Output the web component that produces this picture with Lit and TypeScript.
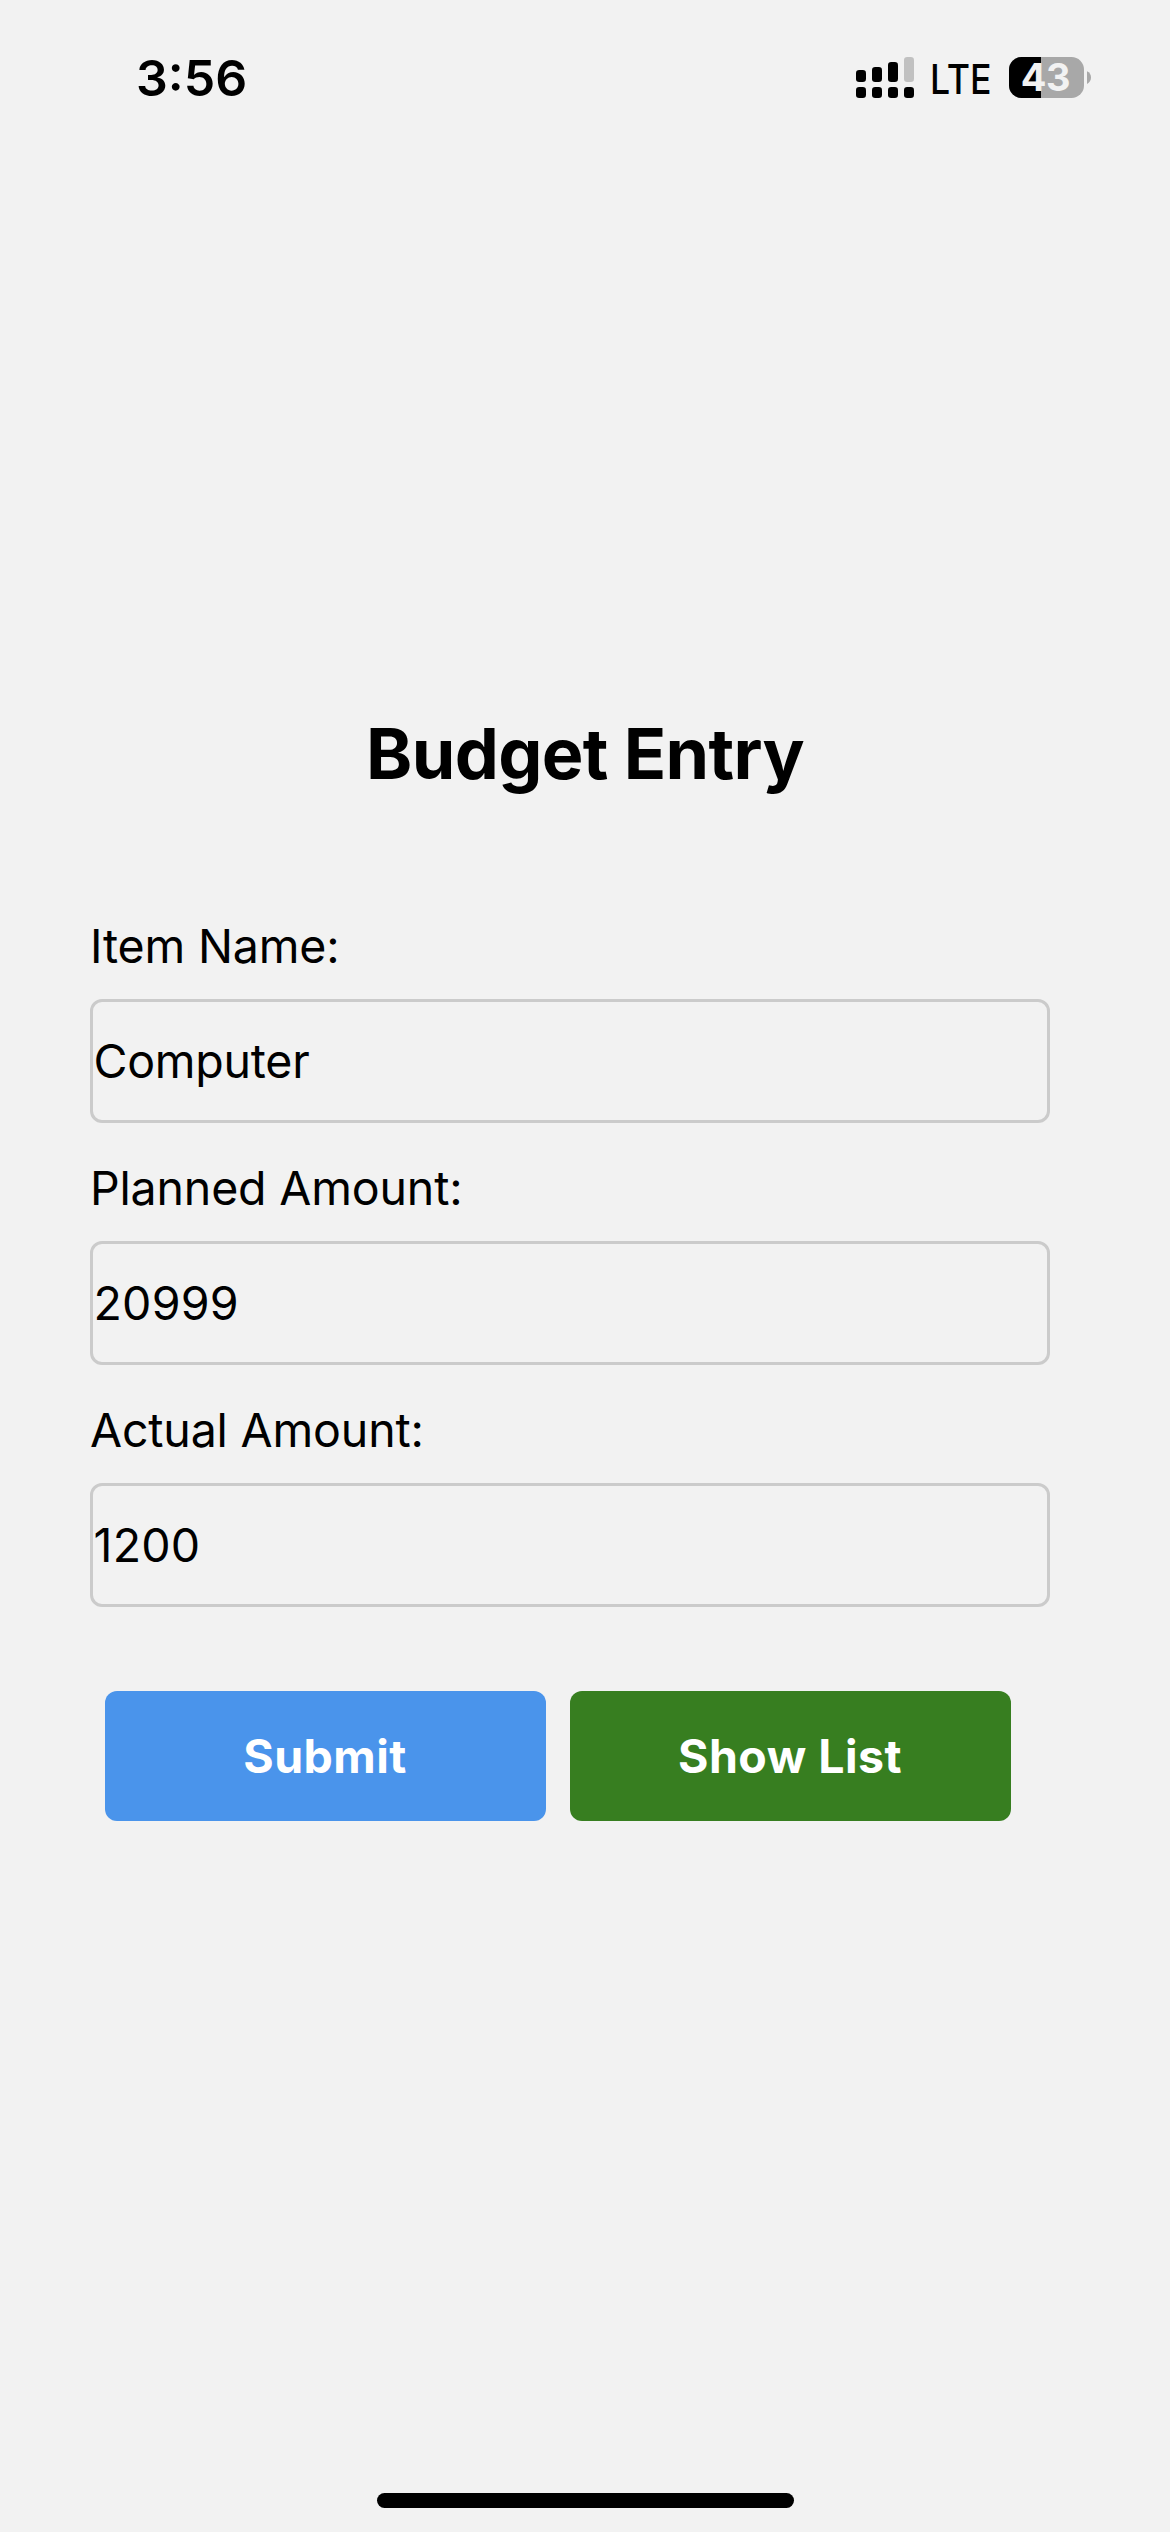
import { LitElement, html, css } from "lit";
import { customElement, property, state } from "lit/decorators.js";

@customElement("status-bar")
class StatusBar extends LitElement {
  static styles = css`
    :host {
      display: flex;
      justify-content: space-between;
      align-items: flex-start;
      box-sizing: border-box;
      height: 141px;
      padding: 48px 78px 0 136px;
      color: #000;
    }
    .time {
      font-size: 50px;
      line-height: 60px;
      font-weight: 600;
    }
    .right {
      display: flex;
      align-items: flex-start;
      padding-top: 6px;
    }
    svg {
      display: block;
      margin-top: 3px;
      overflow: visible;
    }
    .network {
      width: 62px;
      margin-left: 16.4px;
      margin-right: 16.6px;
      font-size: 41px;
      line-height: 50px;
      font-weight: 500;
      transform: scaleX(0.87);
      transform-origin: left center;
      white-space: nowrap;
    }
    .level {
      font-size: 38px;
      font-weight: 700;
      letter-spacing: -0.5px;
    }
  `;

  render() {
    return html`
      <div class="time">3:56</div>
      <div class="right">
        <svg width="58" height="41" viewBox="0 0 58 41">
          <rect x="0" y="13" width="10" height="12" rx="3.2" />
          <rect x="16" y="10" width="10" height="15" rx="3.2" />
          <rect x="32" y="5" width="10" height="20" rx="3.2" />
          <rect x="48" y="0" width="10" height="25" rx="3.2" fill="#c1c1c1" />
          <rect x="0" y="30" width="10" height="11" rx="3.2" />
          <rect x="16" y="30" width="10" height="11" rx="3.2" />
          <rect x="32" y="30" width="10" height="11" rx="3.2" />
          <rect x="48" y="30" width="10" height="11" rx="3.2" />
        </svg>
        <div class="network">LTE</div>
        <svg width="83" height="41" viewBox="0 0 83 41">
          <defs>
            <clipPath id="body"><rect width="75" height="41" rx="12.5" /></clipPath>
          </defs>
          <g clip-path="url(#body)">
            <rect width="75" height="41" fill="#a8a8a8" />
            <rect width="32" height="41" fill="#000" />
          </g>
          <path d="M78 14.2C80.6 15.3 82 17.8 82 20.6C82 23.4 80.6 25.9 78 27Z" fill="#a8a8a8" />
          <text class="level" x="11.8" y="34" fill="#f2f2f2">43</text>
        </svg>
      </div>
    `;
  }
}

@customElement("form-field")
class FormField extends LitElement {
  @property() label = "";
  @property() value = "";
  @property({ type: Boolean, reflect: true }) numeric = false;

  static styles = css`
    :host {
      display: flex;
      flex-direction: column;
      gap: 25px;
      color: #000;
    }
    .label {
      font-size: 46.5px;
      line-height: 56px;
      letter-spacing: -0.17px;
      white-space: nowrap;
    }
    .input {
      box-sizing: border-box;
      width: 100%;
      height: 124px;
      margin: 0;
      padding: 0 0 0 0.5px;
      border: 3px solid #cbcbcb;
      border-radius: 12px;
      outline: none;
      background: transparent;
      color: #000;
      font-family: inherit;
      font-size: 46.5px;
      letter-spacing: -0.25px;
    }
    :host([numeric]) .input {
      letter-spacing: 0.25px;
    }
  `;

  render() {
    return html`
      <label class="label" for="field">${this.label}</label>
      <input class="input" id="field" type="text" .value=${this.value} />
    `;
  }
}

@customElement("app-root")
class AppRoot extends LitElement {
  @state() private fields = [
    { label: "Item Name:", value: "Computer", numeric: false },
    { label: "Planned Amount:", value: "20999", numeric: true },
    { label: "Actual Amount:", value: "1200", numeric: true },
  ];

  static styles = css`
    :host {
      display: flex;
      flex-direction: column;
      box-sizing: border-box;
      width: 1170px;
      height: 2532px;
      overflow: hidden;
      background: #f2f2f2;
      color: #000;
      font-family: Inter, "Liberation Sans", sans-serif;
    }
    .screen {
      flex: 1;
      display: flex;
      flex-direction: column;
      padding: 570px 120px 0 90px;
    }
    .title {
      margin: 0 -30px 122px 0;
      font-size: 70px;
      line-height: 85px;
      font-weight: 700;
      letter-spacing: -0.65px;
      text-align: center;
    }
    .fields {
      display: flex;
      flex-direction: column;
      gap: 37px;
    }
    .actions {
      display: flex;
      gap: 24px;
      margin-top: 84px;
      padding-left: 15px;
    }
    .button {
      width: 441px;
      height: 130px;
      padding: 0 1px 0 0;
      border: 0;
      border-radius: 12px;
      color: #fff;
      font-family: inherit;
      font-size: 46.5px;
      line-height: 56px;
      font-weight: 700;
      letter-spacing: 0.45px;
    }
    .submit {
      background: #4a94eb;
    }
    .list {
      background: #377e20;
    }
    .home {
      align-self: center;
      width: 417px;
      height: 15px;
      margin: 0 0 24px 1px;
      border-radius: 8px;
      background: #000;
    }
  `;

  render() {
    return html`
      <status-bar></status-bar>
      <main class="screen">
        <h1 class="title">Budget Entry</h1>
        <div class="fields">
          ${this.fields.map(
            (f) => html`<form-field .label=${f.label} .value=${f.value} ?numeric=${f.numeric}></form-field>`
          )}
        </div>
        <div class="actions">
          <button class="button submit">Submit</button>
          <button class="button list">Show List</button>
        </div>
      </main>
      <div class="home"></div>
    `;
  }
}
